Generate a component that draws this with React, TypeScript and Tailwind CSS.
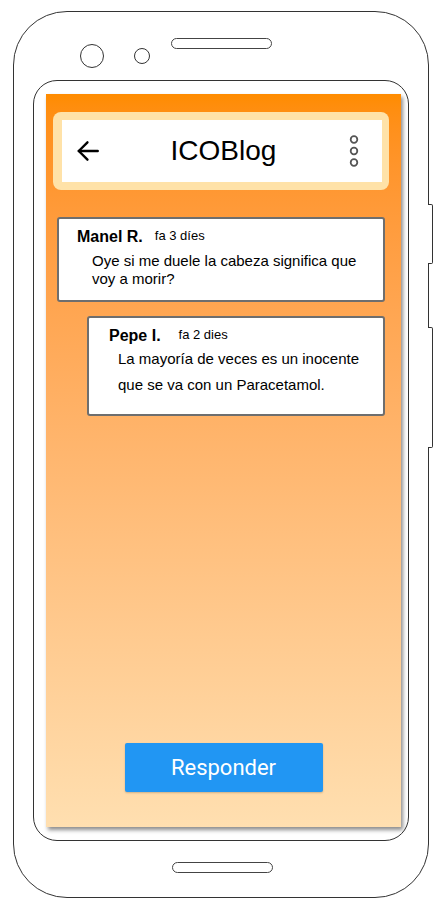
import { ReactNode } from 'react'

function Comment({
  name, when, children, className, bodyClass, nameGap,
}: {
  name: string
  when: string
  children: ReactNode
  className: string
  bodyClass: string
  nameGap: string
}) {
  return (
    <div className={`bg-white border-2 border-[#6e6e6e] rounded-[3px] ${className}`}>
      <div className={`flex items-end ${nameGap}`}>
        <span className="text-[16px] leading-[20px] font-bold text-black">{name}</span>
        <span className="text-[13px] leading-[15px] mb-[4px] text-black">{when}</span>
      </div>
      <p className={`text-[15px] text-black ${bodyClass}`}>{children}</p>
    </div>
  )
}

export default function App() {
  return (
    <div className="w-[440px] h-[908px] bg-white pt-[11px] pl-[13px]" style={{ fontFamily: '"Liberation Sans", Arial, sans-serif' }}>
      {/* Phone body */}
      <div className="relative w-[416px] h-[887px] border border-[#333] rounded-[54px]">
        {/* side buttons */}
        <div className="absolute right-[-5px] top-[192px] w-[5px] h-[60px] border border-l-0 border-[#333] rounded-r-[2px] bg-white" />
        <div className="absolute right-[-5px] top-[315px] w-[5px] h-[121px] border border-l-0 border-[#333] rounded-r-[2px] bg-white" />

        {/* top bezel */}
        <div className="h-[68px] flex items-start pl-[66px]">
          <div className="mt-[32px] w-[24px] h-[24px] rounded-full border border-[#333]" />
          <div className="mt-[36px] ml-[30px] w-[16px] h-[16px] rounded-full border border-[#333]" />
          <div className="mt-[26px] ml-[21px] w-[101px] h-[11px] rounded-full border border-[#444]" />
        </div>

        {/* inner bezel */}
        <div className="ml-[19px] w-[376px] h-[761px] border border-[#333] rounded-[24px] pt-[13px] pl-[12px]">
          {/* screen */}
          <div className="w-[355px] h-[733px] flex flex-col bg-gradient-to-b from-[#ff8c00] to-[#ffdfb0] shadow-[2px_3px_4px_rgba(0,0,0,0.45)]">
            {/* app bar */}
            <div className="mt-[18px] ml-[7px] w-[336px] h-[78px] bg-[#ffe2a8] rounded-[8px] pt-[8px] pl-[9px]">
              <div className="w-[320px] h-[62px] bg-white flex items-center justify-between pl-[13px] pr-[22px]">
                <svg width="26" height="26" viewBox="0 0 24 24" fill="none" stroke="#000" strokeWidth="2.2" strokeLinecap="round" strokeLinejoin="round">
                  <path d="M21 12H3.5" />
                  <path d="M11.5 4L3.5 12l8 8" />
                </svg>
                <span className="text-[28px] leading-none text-black mr-[2px]">ICOBlog</span>
                <svg width="12" height="32" viewBox="0 0 12 32" fill="none" stroke="#555" strokeWidth="1.8">
                  <circle cx="6" cy="4.5" r="3.3" />
                  <circle cx="6" cy="16" r="3.3" />
                  <circle cx="6" cy="27.5" r="3.3" />
                </svg>
              </div>
            </div>

            {/* thread */}
            <Comment
              name="Manel R."
              when="fa 3 díes"
              className="mt-[27px] ml-[11px] w-[328px] h-[85px] pt-[8px] pl-[18px]"
              nameGap="gap-[12px]"
              bodyClass="leading-[18px] mt-[5px] ml-[15px] w-[280px]"
            >
              Oye si me duele la cabeza significa que voy a morir?
            </Comment>

            <Comment
              name="Pepe I."
              when="fa 2 dies"
              className="mt-[14px] ml-[41px] w-[298px] h-[100px] pt-[8px] pl-[20px]"
              nameGap="gap-[18px]"
              bodyClass="leading-[26px] ml-[9px] w-[260px]"
            >
              La mayoría de veces es un inocente que se va con un Paracetamol.
            </Comment>

            <div className="flex-1" />

            <div className="flex justify-center mb-[35px]">
              <button className="w-[198px] h-[49px] bg-[#2196f3] rounded-[2px] text-white text-[22px] shadow-[0_1px_2px_rgba(0,0,0,0.2)]" style={{ fontFamily: 'Roboto, "Liberation Sans", sans-serif' }}>
                Responder
              </button>
            </div>
          </div>
        </div>

        {/* home bar */}
        <div className="mt-[21px] ml-[158px] w-[101px] h-[11px] rounded-full border border-[#444]" />
      </div>
    </div>
  )
}
